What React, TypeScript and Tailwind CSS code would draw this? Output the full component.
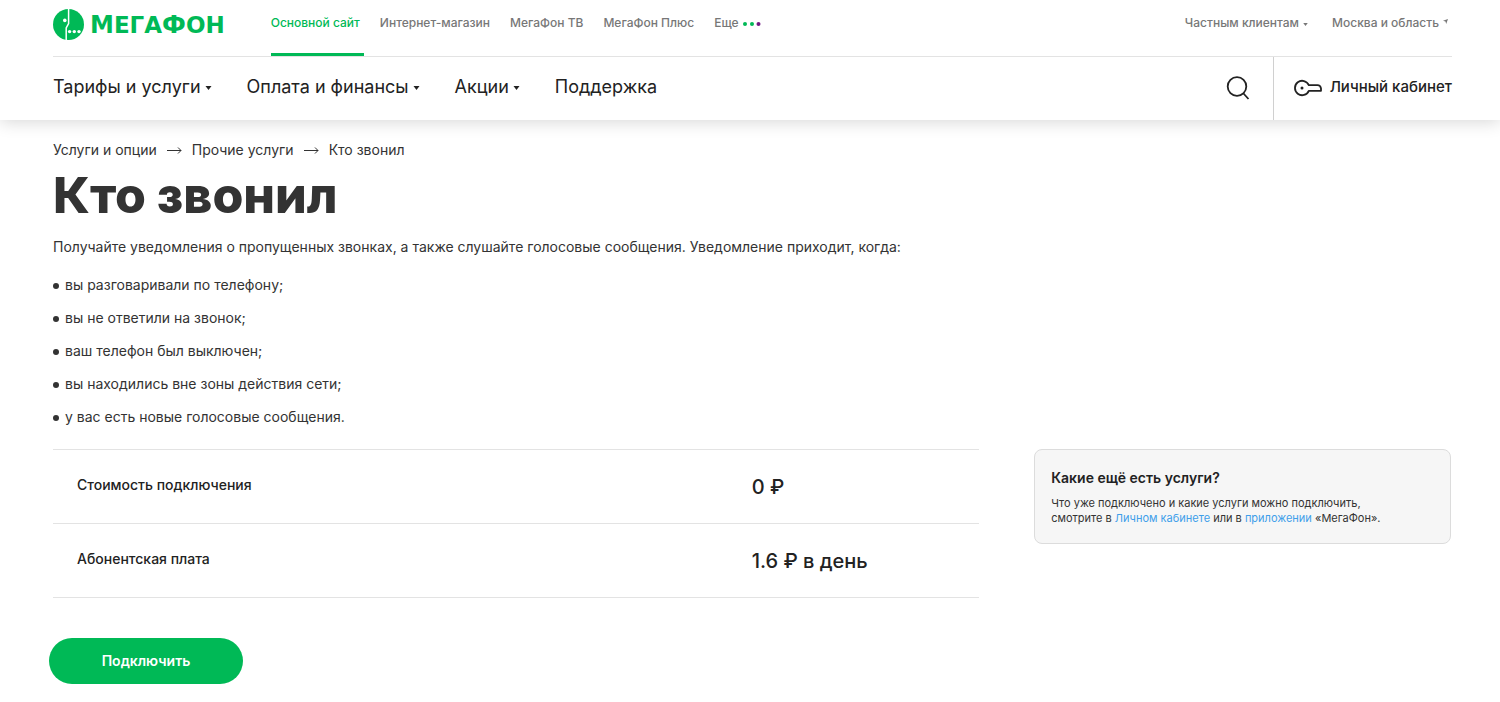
import { FormEvent, useState } from "react";

interface NavItem {
  label: string;
  href: string;
  dropdown?: boolean;
}

const siteLinks: NavItem[] = [
  { label: "Основной сайт", href: "#main" },
  { label: "Интернет-магазин", href: "#shop" },
  { label: "МегаФон ТВ", href: "#tv" },
  { label: "МегаФон Плюс", href: "#plus" },
];

const menu: NavItem[] = [
  { label: "Тарифы и услуги", href: "#tariffs", dropdown: true },
  { label: "Оплата и финансы", href: "#pay", dropdown: true },
  { label: "Акции", href: "#promo", dropdown: true },
  { label: "Поддержка", href: "#help" },
];

const crumbs = ["Услуги и опции", "Прочие услуги", "Кто звонил"];

const reasons = [
  "вы разговаривали по телефону;",
  "вы не ответили на звонок;",
  "ваш телефон был выключен;",
  "вы находились вне зоны действия сети;",
  "у вас есть новые голосовые сообщения.",
];

const prices = [
  { name: "Стоимость подключения", value: "0 ₽" },
  { name: "Абонентская плата", value: "1.6 ₽ в день" },
];

function Caret({ className = "" }: { className?: string }) {
  return (
    <svg viewBox="0 0 6 4" className={className} fill="currentColor" aria-hidden="true">
      <path d="M0 0h6L3 4z" />
    </svg>
  );
}

function Logo() {
  return (
    <a href="#home" className="flex items-center gap-1.5 text-[#00b956]">
      <svg viewBox="0 0 31 31" className="size-[31px]" aria-hidden="true">
        <circle cx="15.5" cy="15.5" r="15.5" fill="currentColor" />
        <path d="M15.6 0v14.5L13.2 19V31" fill="none" stroke="#fff" strokeWidth="1.5" />
        <circle cx="11.8" cy="11.4" r="1.8" fill="#fff" />
        <circle cx="16.6" cy="22.6" r="1.7" fill="#fff" />
        <circle cx="21.3" cy="22.6" r="1.7" fill="#fff" />
        <circle cx="26" cy="22.6" r="1.7" fill="#fff" />
      </svg>
      <span className="font-['DejaVu_Sans',sans-serif] text-2xl leading-none font-bold">
        М<span className="text-[23px] leading-none">ЕГА</span>Ф<span className="text-[23px] leading-none">ОН</span>
      </span>
    </a>
  );
}

function KeyIcon() {
  return (
    <svg viewBox="0 0 28 18" className="h-[18px] w-7" fill="none" stroke="currentColor" strokeWidth="1.8" aria-hidden="true">
      <path d="M14.8 6.2A7.2 7.2 0 1 0 14.8 11.8H27V9.4Q26.4 6.2 23.5 6.2Z" strokeLinejoin="round" />
      <circle cx="8" cy="9" r="1.5" fill="currentColor" stroke="none" />
    </svg>
  );
}

export default function App() {
  const [connected, setConnected] = useState(false);

  const handleSubmit = (e: FormEvent) => {
    e.preventDefault();
    setConnected(true);
  };

  return (
    <div className="min-h-screen bg-white font-[Inter,'Noto_Sans',sans-serif] text-[#333]">
      <header className="pr-12 pl-[53px] shadow-[0_2px_16px_rgba(0,0,0,0.16)]">
        <div className="flex h-[57px] border-b border-[#e3e3e3] text-xs leading-4 font-medium text-[#777]">
          <div className="mr-[46px] pt-[9px]">
            <Logo />
          </div>
          <nav className="flex gap-4">
            {siteLinks.map((l, i) => (
              <a key={l.label} href={l.href}
                className={`pt-[15px] pr-1 ${i === 0 ? "border-b-[3px] border-[#00b956] text-[#00b956]" : ""}`}>
                {l.label}
              </a>
            ))}
            <button className="mt-[15px] flex h-4 items-center gap-1">
              Еще
              <svg viewBox="0 0 18 4" className="mt-0.5 h-1 w-[18px]" aria-hidden="true">
                <circle cx="2" cy="2" r="2" fill="#00b956" />
                <circle cx="9" cy="2" r="2" fill="#00b956" />
                <circle cx="15.5" cy="2" r="2" fill="#731982" />
              </svg>
            </button>
          </nav>
          <div className="ml-auto flex gap-6 pt-[15px]">
            <button className="flex h-4 items-center gap-1">
              Частным клиентам <Caret className="mt-0.5 h-[3px] w-[5px]" />
            </button>
            <button className="flex h-4 items-center gap-1 pr-1">
              Москва и область
              <svg viewBox="0 0 5 5" className="mb-1 size-[5px]" fill="currentColor" aria-hidden="true">
                <path d="M0 1.8L5 0L3.2 5L2.5 2.5z" />
              </svg>
            </button>
          </div>
        </div>

        <div className="flex h-[63px] items-center text-[#222]">
          <nav className="flex gap-[35px] pb-1 text-lg">
            {menu.map((m) => (
              <a key={m.label} href={m.href} className="flex items-center gap-1">
                {m.label}
                {m.dropdown && <Caret className="mt-0.5 h-1 w-[7px]" />}
              </a>
            ))}
          </nav>
          <button aria-label="Поиск" className="mr-[23px] ml-auto pb-0.5">
            <svg viewBox="0 0 24 24" className="size-6" fill="none" stroke="currentColor" strokeWidth="1.8" aria-hidden="true">
              <circle cx="11" cy="10.5" r="9.3" />
              <path d="M17.5 17.5L22.5 23" />
            </svg>
          </button>
          <a href="#lk" className="flex h-full items-center gap-2 border-l border-[#d0d0d0] pb-0.5 pl-5 text-[15px] font-medium">
            <KeyIcon />
            Личный кабинет
          </a>
        </div>
      </header>

      <main className="pt-5 pr-[49px] pl-[53px] text-sm">
        <nav className="flex items-center gap-2.5 leading-5">
          {crumbs.map((c, i) => (
            <div key={c} className="flex items-center gap-2.5">
              {i > 0 && (
                <svg viewBox="0 0 15 7" className="h-[7px] w-[15px]" fill="none" stroke="currentColor" aria-hidden="true">
                  <path d="M0 3.5h14M11 .5l3 3l-3 3" />
                </svg>
              )}
              <a href="#services">{c}</a>
            </div>
          ))}
        </nav>

        <h1 className="mt-[5px] text-[50px] leading-[60px] font-extrabold">Кто звонил</h1>

        <p className="mt-3 leading-5">
          Получайте уведомления о пропущенных звонках, а также слушайте голосовые сообщения. Уведомление приходит, когда:
        </p>
        <ul className="mt-[18px] space-y-[13px] leading-5">
          {reasons.map((r) => (
            <li key={r} className="flex items-center gap-1.5">
              <span className="mt-0.5 size-1.5 rounded-full bg-[#333]" />
              {r}
            </li>
          ))}
        </ul>

        <div className="mt-[22px] grid grid-cols-[20fr_9fr] items-start gap-[55px]">
          <table className="w-full border-y border-[#e3e3e3] text-[#222]">
            <tbody className="divide-y divide-[#e3e3e3]">
              {prices.map((p) => (
                <tr key={p.name} className="h-[74px]">
                  <th scope="row" className="w-3/4 pb-1 pl-6 text-left font-medium">{p.name}</th>
                  <td className="pl-1 text-xl font-medium">{p.value}</td>
                </tr>
              ))}
            </tbody>
          </table>

          <aside className="rounded-lg border border-[#dcdcdc] bg-[#f6f6f6] px-4 pt-[18px] pb-[17px]">
            <h2 className="text-sm leading-5 font-semibold text-[#222]">Какие ещё есть услуги?</h2>
            <p className="mt-2 text-[11px] leading-[15px]">
              Что уже подключено и какие услуги можно подключить,
              <br />
              смотрите в <a href="#lk" className="text-[#3f9fea]">Личном кабинете</a> или
              в <a href="#app" className="text-[#3f9fea]">приложении</a> «МегаФон».
            </p>
          </aside>
        </div>

        <form onSubmit={handleSubmit} className="mt-10 -ml-1">
          <button type="submit" disabled={connected}
            className="h-[46px] w-[194px] rounded-full bg-[#00b956] text-sm font-semibold text-white">
            Подключить
          </button>
        </form>
      </main>
    </div>
  );
}
